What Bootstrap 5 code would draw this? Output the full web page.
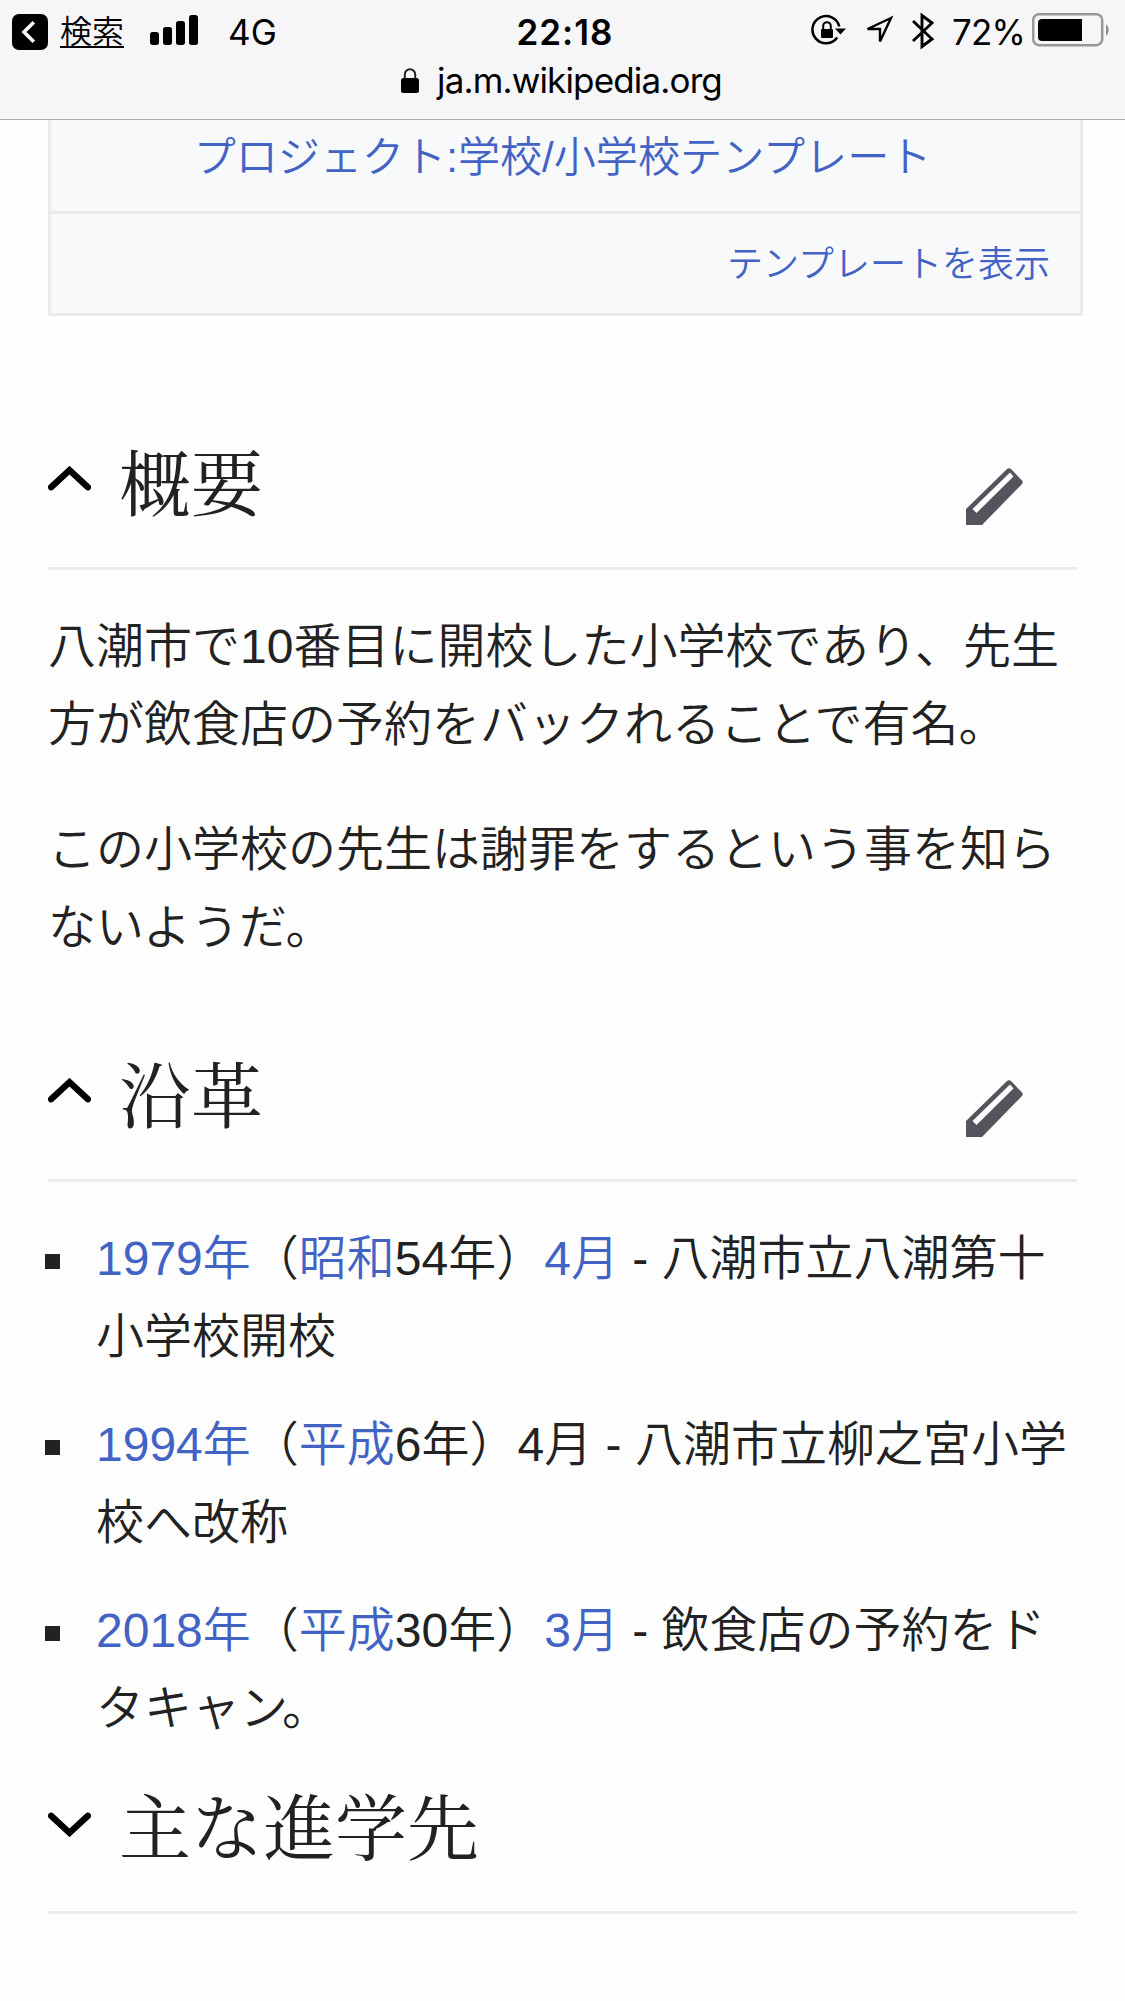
<!DOCTYPE html>
<html lang="ja">
<head>
<meta charset="utf-8">
<meta name="viewport" content="width=device-width, initial-scale=1">
<title>ja.m.wikipedia.org</title>
<link href="https://cdn.jsdelivr.net/npm/bootstrap@5.3.0/dist/css/bootstrap.min.css" rel="stylesheet">
<style>
body{font-family:"Liberation Sans","Noto Sans CJK JP",sans-serif;font-weight:350;color:#222;background:#fefefe;width:1125px;height:2001px;overflow:hidden;font-size:48px;line-height:77.6px}
a{color:#4263c4;text-decoration:none}
.topbar{height:120px;background:#f6f6f8;border-bottom:1px solid #acacae;color:#000;font-family:Inter,"Noto Sans CJK JP",sans-serif;font-weight:400;line-height:1}
.status-row{height:62px;display:grid;grid-template-columns:500px 130px 1fr}
.status-text{font-size:35px;line-height:40px}
.back-label{font-size:32px;font-weight:350;line-height:31px;border-bottom:2px solid #000;height:32px;margin:16px 0 0 12px}
.clock{font-weight:600;letter-spacing:1px}
.percent{letter-spacing:-.8px}
.url-row{height:44px;font-size:35px;line-height:36px}
.url{letter-spacing:-.85px}
.infobox{margin:0 42px 0 48px;background:#f8f9fb;border:solid #ebebee;border-width:0 3px 3px;height:196px}
.infobox-project{height:94px;border-bottom:3px solid #ebebee;font-size:42.1px;line-height:75px;padding-right:6px}
.infobox-edit{height:99px;font-size:36px;line-height:102px;padding-right:30px}
.page-body{margin:83px 48px 0}
.sec-head{height:171px;border-bottom:3px solid #ebecf0}
.sec-head h2{font-family:"Liberation Serif","Noto Serif CJK JP","Noto Serif JP",serif;font-weight:400;font-size:72px;line-height:168px;margin:3px 0 0 28px;color:#222}
.chev{margin-top:67px}
.sec-head.closed .chev{margin-top:69px}
.pencil{margin:69px 54px 0 0}
.prose{height:441px;padding-top:38px}
.prose p{margin:0 0 48px;white-space:nowrap}
.history{margin:0;padding:38px 0 0;list-style:none;height:561px}
.history li{padding-left:48px;margin-bottom:31px;white-space:nowrap;display:flex}
.history li::before{content:"";flex:none;width:15px;height:15px;background:#222;margin:34px 36px 0 -51px}
.tight{letter-spacing:-6px}
</style>
<script src="https://cdn.jsdelivr.net/npm/bootstrap@5.3.0/dist/js/bootstrap.bundle.min.js"></script>
</head>
<body>
<header class="topbar">
  <div class="status-row">
    <div class="d-flex align-items-start">
      <svg width="36" height="36" viewBox="0 0 36 36" style="margin:14px 0 0 12px"><rect width="36" height="36" rx="7"/><path d="M21.8 8.2 12 18l9.8 9.8" fill="none" stroke="#fff" stroke-width="3.6"/></svg>
      <span class="back-label">検索</span>
      <svg width="49" height="31" viewBox="0 0 49 31" style="margin:15px 0 0 26px"><rect y="17" width="9" height="13" rx="2.7"/><rect x="13" y="12" width="9" height="18" rx="2.7"/><rect x="26" y="6" width="9" height="24" rx="2.7"/><rect x="39" width="9" height="30" rx="2.7"/></svg>
      <span class="status-text" style="margin:12px 0 0 29px">4G</span>
    </div>
    <div class="status-text clock text-center" style="margin-top:12px">22:18</div>
    <div class="d-flex align-items-start">
      <svg width="36" height="32" viewBox="0 0 36 32" style="margin:14px 0 0 181px"><path d="M28.3 12.5A13.6 13.6 0 1 0 26.2 23.5" fill="none" stroke="#000" stroke-width="2.5"/><path d="M24 14.5h11L29.5 20.5z"/><rect x="10" y="15" width="12" height="9" rx="1"/><path d="M12.2 16v-4a3.8 3.8 0 0 1 7.6 0v4" fill="none" stroke="#000" stroke-width="2"/></svg>
      <svg width="32" height="32" viewBox="0 0 32 32" style="margin:15px 0 0 16px"><path d="M28 3 4.5 14H17v12.5z" fill="none" stroke="#000" stroke-width="2.4"/></svg>
      <svg width="24" height="38" viewBox="0 0 24 38" style="margin:12px 0 0 16px"><path d="m2 9 19 18-10 7.500V3.500L21 11 2 29" fill="none" stroke="#000" stroke-width="2.9"/></svg>
      <span class="status-text percent" style="margin:12px 0 0 17px">72%</span>
      <svg width="80" height="34" viewBox="0 0 80 34" style="margin:13px 0 0 7px"><rect x="1.2" y="1.2" width="69" height="31" rx="6" fill="none" stroke="#98989a" stroke-width="2.5"/><path d="M10 6h40v22H10a4 4 0 0 1-4-4V10a4 4 0 0 1 4-4z"/><path d="M74 11a8 8 0 0 1 0 12z" fill="#8e8e90"/></svg>
    </div>
  </div>
  <div class="url-row d-flex">
    <svg width="18" height="27" viewBox="0 0 18 27" style="margin:5px 18px 0 401px"><rect y="11" width="18" height="15" rx="2.5"/><path d="M3.8 12V7.5a5.2 5.2 0 0 1 10.4 0V12" fill="none" stroke="#222" stroke-width="2"/></svg>
    <span class="url">ja.m.wikipedia.org</span>
  </div>
</header>
<div class="infobox">
  <div class="infobox-project text-center"><a href="#">プロジェクト:学校/小学校テンプレート</a></div>
  <div class="infobox-edit text-end"><a href="#">テンプレートを表示</a></div>
</div>
<main class="page-body">
  <div class="sec-head d-flex align-items-start">
    <svg class="chev" width="43" height="25" viewBox="0 0 43 25"><path d="m3.200 21.200 18.300-17 18.300 17" fill="none" stroke="#000" stroke-width="6.400" stroke-linecap="round"/></svg>
    <h2>概要</h2>
    <svg class="pencil ms-auto" width="57" height="57" viewBox="0 0 57 57"><path fill="#54555c" fill-rule="evenodd" d="M0 57V41L40.5 1.5q2.5-2.5 5 0l10 10.500q2.500 2 0 4.500L16 57zM6.500 41l4 4L47.500 8.500 44 4.500z"/></svg>
  </div>
  <section class="prose">
    <p>八潮市で10番目に開校した小学校であり、先生<br>方が飲食店の予約をバックれることで有名。</p>
    <p>この小学校の先生は謝罪をするという事を知ら<br>ないようだ。</p>
  </section>
  <div class="sec-head d-flex align-items-start">
    <svg class="chev" width="43" height="25" viewBox="0 0 43 25"><path d="m3.200 21.200 18.300-17 18.300 17" fill="none" stroke="#000" stroke-width="6.400" stroke-linecap="round"/></svg>
    <h2>沿革</h2>
    <svg class="pencil ms-auto" width="57" height="57" viewBox="0 0 57 57"><path fill="#54555c" fill-rule="evenodd" d="M0 57V41L40.5 1.5q2.5-2.5 5 0l10 10.500q2.500 2 0 4.500L16 57zM6.500 41l4 4L47.500 8.500 44 4.500z"/></svg>
  </div>
  <ul class="history">
    <li><div><a href="#">1979年</a>（<a href="#">昭和</a>54年）<a href="#">4月</a> - 八潮市立八潮第十<br>小学校開校</div></li>
    <li><div><a href="#">1994年</a>（<a href="#">平成</a>6年）4月 - 八潮市立柳之宮小学<br>校へ改称</div></li>
    <li><div><a href="#">2018年</a>（<a href="#">平成</a>30年）<a href="#">3月</a> - 飲食店の予約をド<br>タキャ<span class="tight">ン</span>。</div></li>
  </ul>
  <div class="sec-head closed d-flex align-items-start">
    <svg class="chev" width="43" height="25" viewBox="0 0 43 25"><path d="m3.200 3.800 18.300 17 18.300-17" fill="none" stroke="#000" stroke-width="6.400" stroke-linecap="round"/></svg>
    <h2>主な進学先</h2>
  </div>
</main>
</body>
</html>
